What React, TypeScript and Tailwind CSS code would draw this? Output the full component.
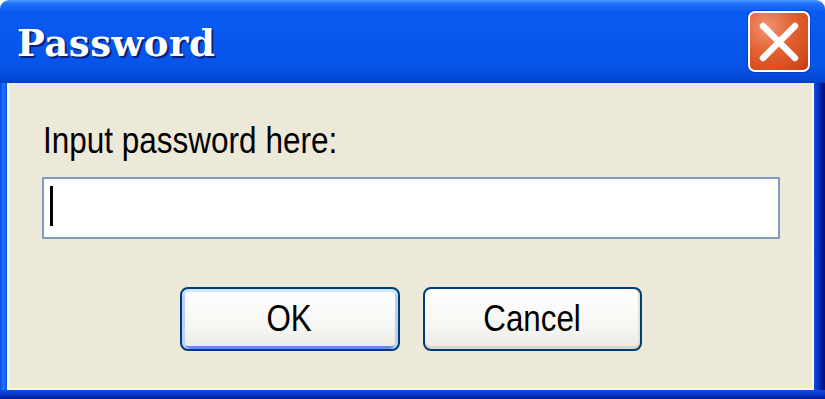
import React from "react";

export default function App() {
  return (
    <div className="w-[825px] h-[399px] bg-white overflow-hidden">
      <div className="w-[825px] h-[399px] flex flex-col rounded-t-[9px] overflow-hidden">
        {/* Title bar */}
        <div className="h-[83px] shrink-0 flex items-center justify-between pl-[17px] pr-[15px] bg-[linear-gradient(to_bottom,#4b9bff_0px,#1f6ff8_4px,#0a5cf0_12px,#0857ec_40px,#0654e8_65px,#0549d8_78px,#0440c8_83px)]">
          <span
            className="text-white font-bold text-[37px] leading-none tracking-[0.5px] [text-shadow:2px_2px_0_#0a1f7a] mt-[4px]"
            style={{ fontFamily: '"DejaVu Serif", "Liberation Serif", serif' }}
          >
            Password
          </span>
          <div className="w-[62px] h-[61px] rounded-[7px] border-2 border-white bg-[radial-gradient(circle_at_30%_25%,#f09474_0%,#e3602f_45%,#d44b1d_80%,#bf3b12_100%)] flex items-center justify-center shadow-[0_0_0_1px_rgba(0,40,150,0.4)]">
            <svg width="58" height="57" viewBox="0 0 58 57">
              <line x1="13" y1="13" x2="45" y2="45" stroke="white" strokeWidth="6.5" strokeLinecap="round" />
              <line x1="45" y1="13" x2="13" y2="45" stroke="white" strokeWidth="6.5" strokeLinecap="round" />
            </svg>
          </div>
        </div>
        {/* Body with side borders */}
        <div className="flex flex-1 min-h-0">
          <div className="w-[7px] bg-[linear-gradient(to_right,#0a48d8,#1f74ff_45%,#0a55e6)]" />
          <div className="flex-1 bg-[#ece9d8] border-l-2 border-r-2 border-b-2 border-[#fbf6e4] flex flex-col pt-[40px] pl-[33px] pr-[32px]">
            <div
              className="text-[36px] leading-[36px] text-black ml-[1px] origin-left scale-x-[0.875] whitespace-nowrap"
              style={{ fontFamily: '"Liberation Sans", Arial, sans-serif' }}
            >
              Input password here:
            </div>
            <div className="mt-[18px] h-[62px] border-2 border-[#7f9db9] bg-white pl-[6px] pt-[7px]">
              <div className="w-[3px] h-[40px] bg-black" />
            </div>
            <div className="mt-[48px] flex justify-center gap-[23px] pr-[1px]">
              <button
                className="w-[220px] h-[64px] rounded-[8px] border-2 border-[#003c74] bg-[linear-gradient(to_bottom,#ffffff,#f6f6f3_60%,#ebeae4)] shadow-[inset_0_3px_0_#cee7ff,inset_3px_0_0_#b8d0fb,inset_-3px_0_0_#b8d0fb,inset_0_-3px_0_#6b86ee] flex items-center justify-center"
              >
                <span
                  className="text-[36px] leading-none text-black scale-x-[0.87] inline-block"
                  style={{ fontFamily: '"Liberation Sans", Arial, sans-serif' }}
                >
                  OK
                </span>
              </button>
              <button
                className="w-[219px] h-[64px] rounded-[8px] border-2 border-[#003c74] bg-[linear-gradient(to_bottom,#ffffff,#f6f6f3_60%,#ebeae4)] shadow-[inset_0_-3px_0_#dcd6c8,inset_-2px_0_0_#e6e2d6] flex items-center justify-center"
              >
                <span
                  className="text-[36px] leading-none text-black scale-x-[0.87] inline-block"
                  style={{ fontFamily: '"Liberation Sans", Arial, sans-serif' }}
                >
                  Cancel
                </span>
              </button>
            </div>
          </div>
          <div className="w-[11px] bg-[linear-gradient(to_right,#0a4ee2,#0634c0_40%,#001890_80%,#001080)]" />
        </div>
        <div className="h-[9px] shrink-0 bg-[linear-gradient(to_bottom,#0a4fe0,#0636c4_50%,#001a9a)]" />
      </div>
    </div>
  );
}
